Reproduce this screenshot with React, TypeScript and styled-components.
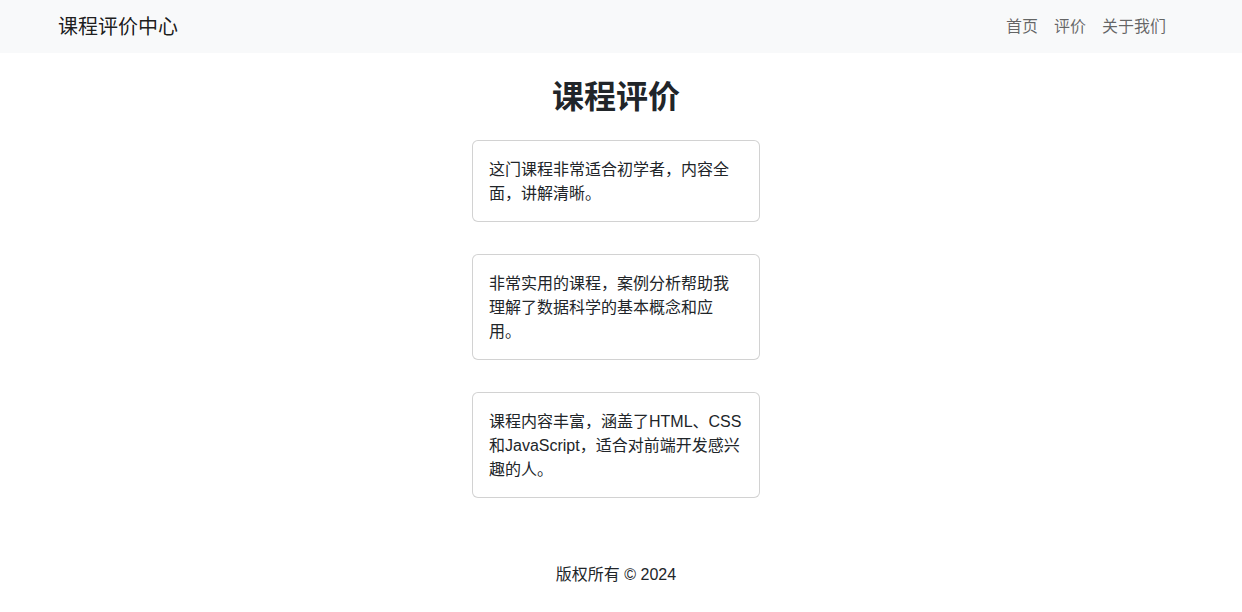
import styled, { createGlobalStyle } from "styled-components";

const GlobalStyle = createGlobalStyle`
  html, body {
    margin: 0;
    padding: 0;
    background: #fff;
  }
  body {
    font-family: "Liberation Sans", "Noto Sans CJK SC", sans-serif;
    font-size: 16px;
    line-height: 24px;
    color: #212529;
  }
`;

const reviews = [
  "这门课程非常适合初学者，内容全面，讲解清晰。",
  "非常实用的课程，案例分析帮助我理解了数据科学的基本概念和应用。",
  "课程内容丰富，涵盖了HTML、CSS和JavaScript，适合对前端开发感兴趣的人。",
];

const links = ["首页", "评价", "关于我们"];

function App() {
  return (
    <>
      <GlobalStyle />
      <Navbar>
        <Brand href="#">课程评价中心</Brand>
        <NavList>
          {links.map((l) => (
            <NavLink key={l} href="#">
              {l}
            </NavLink>
          ))}
        </NavList>
      </Navbar>
      <Main>
        <Title>课程评价</Title>
        <CardList>
          {reviews.map((r) => (
            <Card key={r}>
              <CardText>{r}</CardText>
            </Card>
          ))}
        </CardList>
      </Main>
      <Footer>版权所有 © 2024</Footer>
    </>
  );
}

const Navbar = styled.nav`
  height: 53px;
  background: #f8f9fa;
  display: flex;
  align-items: center;
  justify-content: space-between;
  padding: 0 68px 0 58px;
`;

const Brand = styled.a`
  font-size: 20px;
  line-height: 30px;
  color: rgba(0, 0, 0, 0.9);
  text-decoration: none;
`;

const NavList = styled.div`
  display: flex;
`;

const NavLink = styled.a`
  padding: 0 8px;
  font-size: 16px;
  line-height: 24px;
  color: rgba(0, 0, 0, 0.6);
  text-decoration: none;
`;

const Main = styled.main`
  display: flex;
  flex-direction: column;
  align-items: center;
  padding: 25px 10px 0 0;
`;

const Title = styled.h2`
  margin: 0 0 23.6px;
  font-size: 32px;
  line-height: 38.4px;
  font-weight: 700;
  color: #212529;
`;

const CardList = styled.div`
  display: flex;
  flex-direction: column;
  gap: 32px;
`;

const Card = styled.div`
  width: 288px;
  box-sizing: border-box;
  border: 1px solid rgba(0, 0, 0, 0.175);
  border-radius: 6px;
  padding: 17px 16px 15px;
  background: #fff;
`;

const CardText = styled.p`
  margin: 0;
`;

const Footer = styled.footer`
  margin-top: 65px;
  padding-right: 10px;
  text-align: center;
  line-height: 24px;
`;

export default App;
